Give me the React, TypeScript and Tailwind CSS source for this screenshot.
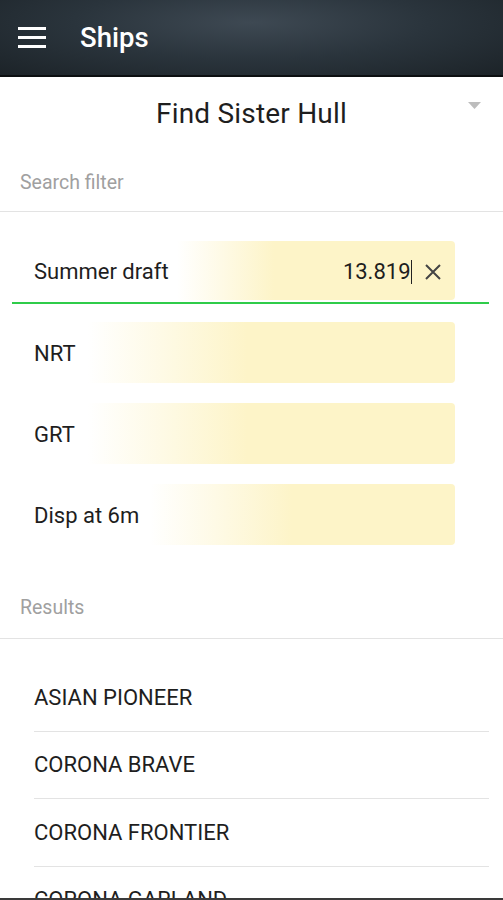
import React from 'react';

const ships = ['ASIAN PIONEER', 'CORONA BRAVE', 'CORONA FRONTIER', 'CORONA GARLAND', 'CORONA HORIZON'];

function Field({ label, value, bg, active }: { label: string; value?: string; bg: string; active?: boolean }) {
  return (
    <div className="flex flex-col">
      <div className={`ml-[12px] w-[443px] ${active ? 'h-[59px]' : 'h-[61px]'} rounded-[4px] ${bg} flex items-center pt-[2px] pl-[22px] pr-[13px]`}>
        <span className="text-[22px] text-[#1e1e1e]">{label}</span>
        {active && (
          <div className="ml-auto flex items-center">
            <span className="text-[22px] text-[#1e1e1e]">{value}</span>
            <span className="w-[1.5px] h-[24px] bg-[#222]" />
            <svg className="ml-[12px]" width="18" height="18" viewBox="0 0 18 18">
              <path d="M2 2 L16 16 M16 2 L2 16" stroke="#444" strokeWidth="2" />
            </svg>
          </div>
        )}
      </div>
      {active && <div className="ml-[12px] mt-[2px] w-[477px] h-[2px] bg-[#2fcc4a]" />}
    </div>
  );
}

export default function App() {
  return (
    <div className="w-[503px] h-[900px] overflow-hidden flex flex-col bg-white font-['Roboto',sans-serif]">
      <div className="h-[77px] shrink-0 flex items-center border-b-2 border-[#0c0f11] bg-[radial-gradient(ellipse_at_50%_30%,#3e4953_0%,#2a343c_50%,#1c2328_100%)]">
        <div className="ml-[18px] flex flex-col gap-[5.5px]">
          <span className="block w-[28px] h-[3.5px] bg-white" />
          <span className="block w-[28px] h-[3.5px] bg-white" />
          <span className="block w-[28px] h-[3.5px] bg-white" />
        </div>
        <span className="ml-[34px] text-[27.5px] font-medium text-white">Ships</span>
      </div>

      <div className="h-[72px] shrink-0 relative flex items-center justify-center pt-[2px]">
        <span className="text-[28px] text-[#1e1e1e] tracking-[0.2px]">Find Sister Hull</span>
        <svg className="absolute right-[22px] top-[25px]" width="13" height="7" viewBox="0 0 13 7">
          <path d="M0 0 L13 0 L6.5 7 Z" fill="#bdbdbd" />
        </svg>
      </div>

      <div className="h-[63px] shrink-0 flex items-end pb-[17px] pl-[20px] border-b border-[#e3e3e3]">
        <span className="text-[19.5px] leading-[22px] text-[#a0a0a0]">Search filter</span>
      </div>

      <div className="pt-[29px] flex flex-col gap-[18px]">
        <Field label="Summer draft" value="13.819" active bg="bg-[linear-gradient(90deg,#ffffff_165px,#fdf4c8_262px)]" />
        <div className="flex flex-col gap-[20px]">
          <Field label="NRT" bg="bg-[linear-gradient(90deg,#ffffff_76px,#fdf4c8_235px)]" />
          <Field label="GRT" bg="bg-[linear-gradient(90deg,#ffffff_76px,#fdf4c8_235px)]" />
          <Field label="Disp at 6m" bg="bg-[linear-gradient(90deg,#ffffff_138px,#fdf4c8_280px)]" />
        </div>
      </div>

      <div className="h-[94px] shrink-0 flex items-end pb-[19px] pl-[20px] border-b border-[#e3e3e3]">
        <span className="text-[19.5px] leading-[22px] text-[#a0a0a0]">Results</span>
      </div>

      <div className="flex-1 overflow-hidden pt-[25px]">
        {ships.map((s) => (
          <div key={s} className="ml-[34px] mr-[14px] h-[67.5px] flex items-center border-b border-[#e3e3e3]">
            <span className="text-[22px] text-[#1e1e1e]">{s}</span>
          </div>
        ))}
      </div>
      <div className="h-[2px] shrink-0 bg-[#3a3a3a]" />
    </div>
  );
}
